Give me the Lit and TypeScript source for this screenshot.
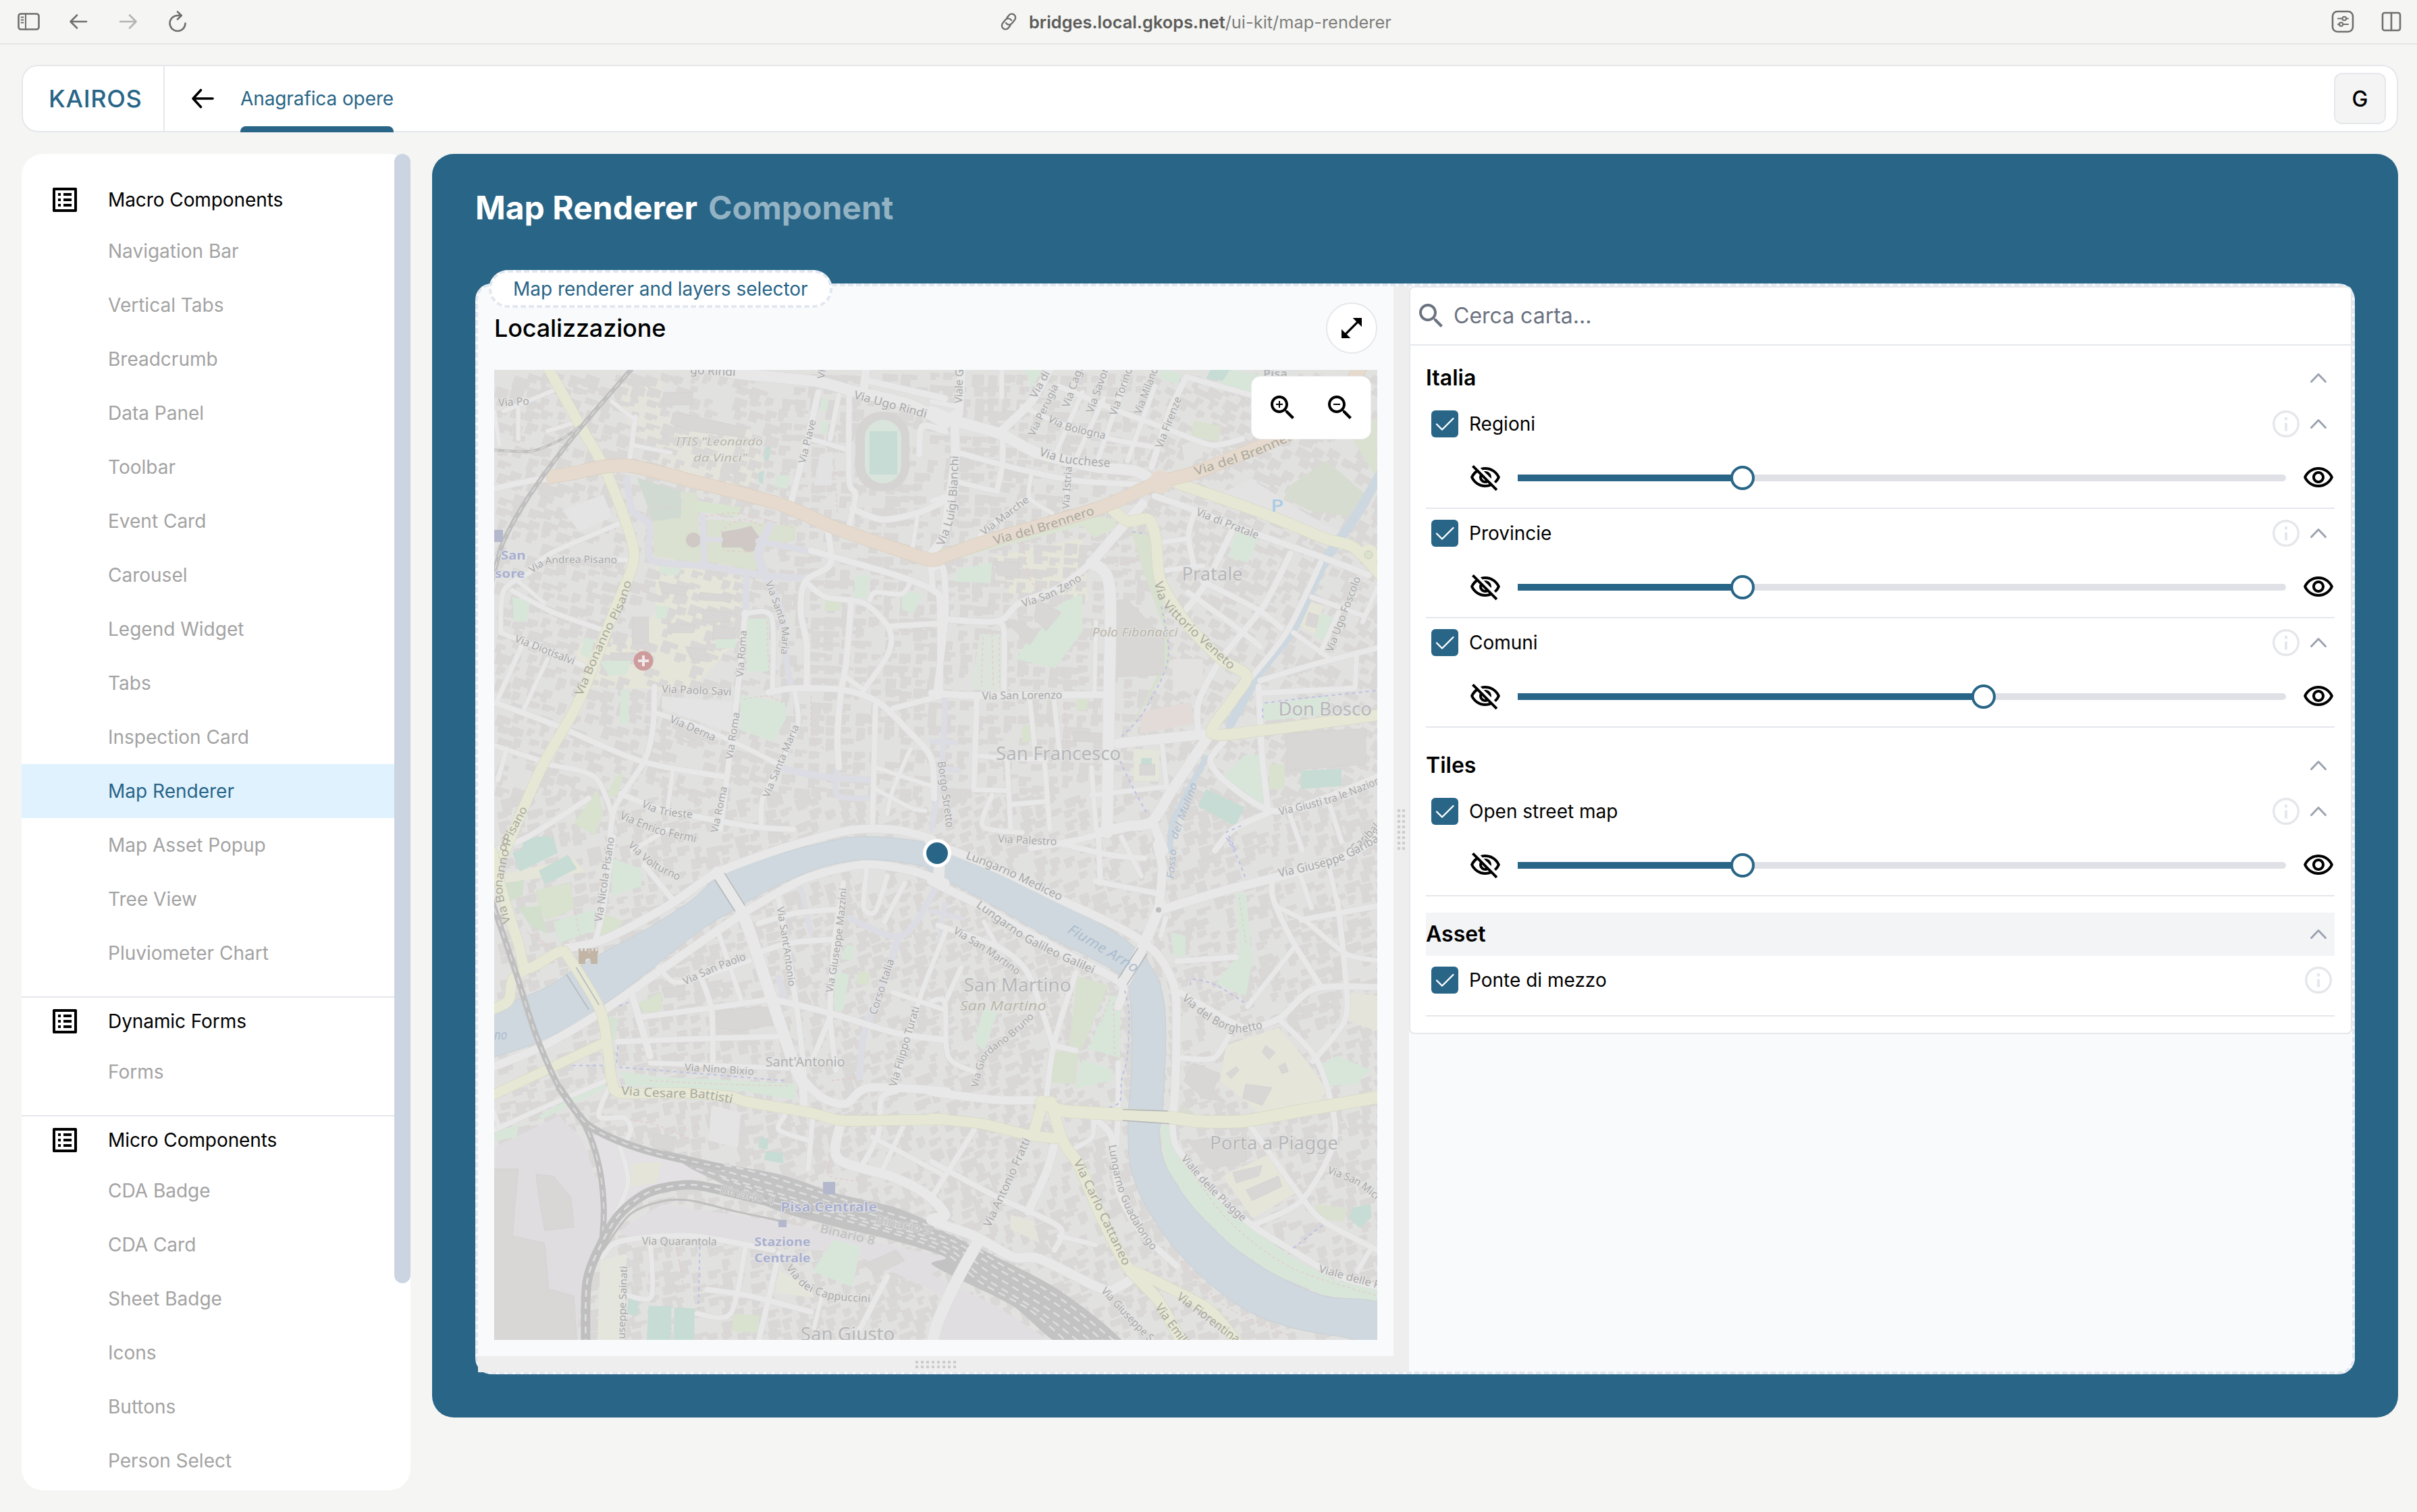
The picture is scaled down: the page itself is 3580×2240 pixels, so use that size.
import { LitElement, html, css, svg, nothing } from "lit";
import { customElement, property } from "lit/decorators.js";

/* ---------- Map geometry ---------- */

// The city is digitised on four sheets, each with its own scale and origin.
type Pt = [number, number];
const SHEETS: Record<string, [number, number, number, number]> = {
  A: [2.306, 2.178, -12, -8],
  B: [2.24, 2.178, 648, -8],
  C: [2.306, 1.912, -12, 692],
  D: [2.063, 1.912, 648, 692],
};

function points(src: string): Pt[] {
  let sheet = SHEETS.A;
  const out: Pt[] = [];
  for (const token of src.trim().split(/\s+/)) {
    if (SHEETS[token]) {
      sheet = SHEETS[token];
      continue;
    }
    const [x, y] = token.split(",").map(Number);
    out.push([+(x / sheet[0] + sheet[2]).toFixed(1), +(y / sheet[1] + sheet[3]).toFixed(1)]);
  }
  return out;
}

function smooth(src: string): string {
  const p = points(src);
  let d = `M${p[0][0]} ${p[0][1]}`;
  for (let i = 0; i < p.length - 1; i++) {
    const a = p[i - 1] ?? p[i];
    const b = p[i];
    const c = p[i + 1];
    const e = p[i + 2] ?? c;
    const k = 7;
    d += `C${b[0] + (c[0] - a[0]) / k} ${b[1] + (c[1] - a[1]) / k} ${c[0] - (e[0] - b[0]) / k} ${c[1] - (e[1] - b[1]) / k} ${c[0]} ${c[1]}`;
  }
  return d;
}

const area = (src: string) =>
  "M" + points(src).map((q) => q.join(" ")).join("L") + "Z";

function buildings(): string {
  let seed = 41;
  const rnd = () => {
    seed = (seed * 16807) % 2147483647;
    return seed / 2147483647;
  };
  let d = "";
  for (let y = 4; y < 1437; y += 18) {
    for (let x = 4; x < 1308; x += 22) {
      if (rnd() < 0.14) continue;
      const west = x < 420;
      const north = y < 620;
      const t = west ? (north ? 0.32 : -0.22) : x > 950 ? (north ? 0.5 : -0.3) : north ? 0.08 : -0.35;
      const w = 10 + rnd() * 14;
      const h = 8 + rnd() * 11;
      const c = Math.cos(t);
      const s = Math.sin(t);
      const ox = x + rnd() * 6;
      const oy = y + rnd() * 5;
      const n = rnd() * 0.5 + 0.35;
      const shape: Pt[] = [[0, 0], [w, 0], [w, h * n], [w * 0.6, h * n], [w * 0.6, h], [0, h]];
      d += "M" + shape.map(([u, v]) => `${(ox + u * c - v * s).toFixed(1)} ${(oy + u * s + v * c).toFixed(1)}`).join("L") + "Z";
    }
  }
  return d;
}

const RIVER =
  "C 0,500 110,460 220,420 300,375 420,318 560,255 700,180 790,115 920,70 1080,30 1250,0 1380,2 1500,15 D 0,32 100,60 250,125 420,195 560,270 640,330 690,400 712,480 715,600 705,780 695,850 720,940 800,1050 920,1160 1050,1240 1200,1300 1375,1322 1375,1430 1250,1415 1100,1390 960,1340 830,1250 720,1140 640,1020 605,920 600,800 608,700 612,600 608,470 590,400 480,340 350,280 200,200 80,140 0,100 C 1500,85 1400,70 1280,65 1150,85 1000,135 880,190 740,260 600,350 480,430 400,475 300,530 180,580 100,605 0,630";

const UNDER: [string, string][] = [
  ["#e5e4dc", "A 430,60 600,40 610,170 900,210 950,330 900,400 600,330 500,220"],
  ["#e5e5da", "A 580,630 870,690 870,880 700,1050 340,1040 300,900 500,880 580,800"],
  ["#e5e5da", "B 200,620 500,560 520,760 260,740"],
];

// Grounds drawn over the generic blocks
const OPEN: [string, string][] = [
  ["#e5e5da", "D 900,590 1060,540 1150,640 1210,720 1160,770 1000,780 880,690"],
  ["#e5e5da", "D 890,960 1050,890 1110,1010 980,1080"],
  ["#e0dde1", "C 0,890 250,790 330,860 390,1000 390,1130 330,1250 310,1440 0,1440"],
  ["#e1dee2", "C 450,1120 600,1040 1000,1090 1568,1190 D 0,1240 200,1330 380,1440 0,1440 C 1568,1300 1250,1180 1000,1160 700,1125 480,1130"],
  ["#e4e1e4", "C 350,840 460,870 590,900 800,950 600,990 460,1050 400,1120 395,950"],
  ["#e3dbd8", "B 700,1120 860,1090 870,1160 690,1190"],
  ["#e4e4e4", "A 600,1070 850,1090 840,1190 600,1110"],
  ["#e4e4e4", "A 260,470 400,420 430,490 320,540"],
  ["#e3e3e3", "B 900,440 1060,370 1240,480 1390,560 1300,560 1100,480"],
  ["#e2e2e1", "B 830,260 900,230 900,300 840,320"],
  ["#e2e2e2", "A 1140,290 1185,280 1180,390 1120,390"],
  ["#e4e4e4", "C 770,760 870,780 860,880 760,860"],
  ["#e4e2e0", "B 800,950 900,950 900,1040 800,1060"],
];

const PARKS: [string, string][] = [
  ["#d0dad2", "A 515,365 665,410 668,495 570,505"],
  ["#dae1d0", "A 570,505 665,495 670,410 720,415 735,640 575,620"],
  ["#dae1d0", "A 755,500 1060,520 1055,570 960,580 920,665 755,635"],
  ["#d9e4d0", "A 720,440 870,460 860,490 720,475"],
  ["#d8e6da", "A 890,820 965,820 968,990 890,990"],
  ["#d8e6da", "A 870,1065 1020,1090 1025,1140 980,1215 870,1180"],
  ["#d8e6da", "A 90,750 150,765 140,830 95,830"],
  ["#d8e6da", "A 390,960 500,940 480,1000 420,1005"],
  ["#d8e6da", "A 340,880 370,890 350,950 320,930"],
  ["#d8e6da", "A 460,1050 490,1050 485,1160 455,1160"],
  ["#d8e6da", "A 1260,680 1310,680 1300,755 1258,750"],
  ["#d8e6da", "A 1420,730 1490,740 1460,805 1420,790"],
  ["#d8e6da", "A 590,650 665,655 655,680 595,675"],
  ["#d8e6da", "A 580,780 625,780 615,820 580,820"],
  ["#d8e6da", "A 785,880 855,885 850,915 785,915"],
  ["#d9e1cf", "A 1160,755 1215,765 1210,795 1155,795"],
  ["#d9e1cf", "A 380,1370 400,1450 370,1520 300,1480"],
  ["#d9e1cf", "A 440,1330 470,1320 450,1390 410,1400"],
  ["#d8e6da", "A 1145,110 1170,110 1165,150 1140,150"],
  ["#d8e6da", "A 1145,185 1170,185 1165,225 1140,220"],
  ["#c6dcd4", "A 130,1530 215,1520 240,1568 120,1568"],
  ["#c6dcd4", "A 955,265 972,265 965,310 948,305"],
  ["#c6dcd4", "A 933,345 950,345 945,385 930,380"],
  ["#d8e6da", "A 990,355 1035,360 1030,400 985,395"],
  ["#dbe3d2", "B 0,600 560,490 600,500 620,520 540,560 500,520 100,620"],
  ["#d8e0cf", "B 660,530 740,560 760,700 780,860 790,960 700,1110 640,1200 720,1060 770,960 770,850 700,660"],
  ["#d8e6da", "B 90,660 200,640 195,705 75,700"],
  ["#d8e6da", "B 430,770 500,740 500,860 410,980 280,950 320,890 350,870"],
  ["#dde4dc", "B 160,870 230,870 230,1050 130,1050"],
  ["#d6dccf", "B 1190,390 1310,310 1440,420 1380,490 1250,470 1170,430"],
  ["#dae1d0", "B 1390,230 1478,170 1478,370"],
  ["#dae1d0", "B 870,180 960,200 950,250 860,230"],
  ["#d8e6da", "B 1010,540 1085,560 1050,640 985,620"],
  ["#e5e5da", "B 1240,760 1300,780 1270,870 1200,830"],
  ["#d8e6da", "B 1290,800 1330,820 1310,890 1270,880"],
  ["#d8e6da", "B 1095,1095 1320,1070 1300,1130 1100,1150"],
  ["#d8e6da", "B 1040,1260 1100,1260 1100,1420 970,1330"],
  ["#d9e1cf", "B 1120,1290 1170,1290 1170,1370 1120,1370"],
  ["#d9e1cf", "B 300,1165 350,1160 345,1215 300,1220"],
  ["#d9e1cf", "B 480,1080 520,1080 515,1115 480,1115"],
  ["#e4e5db", "B 670,1240 755,1245 755,1345 670,1345"],
  ["#c6dcd4", "B 695,1270 730,1270 730,1295 695,1295"],
  ["#c6dcd4", "B 1225,1310 1360,1305 1360,1360 1225,1370"],
  ["#c6dcd4", "B 910,1370 1040,1430 1005,1490 885,1425"],
  ["#c6dcd4", "B 925,17 990,17 975,55 910,45"],
  ["#d8e6da", "B 990,17 1130,40 1150,120 1060,100 960,60"],
  ["#d8e6da", "B 310,17 370,17 330,75"],
  ["#d8e6da", "B 770,17 830,30 815,65 750,40"],
  ["#e5e5d9", "C 30,110 300,60 340,100 60,130"],
  ["#c6dcd4", "C 90,45 230,0 245,45 115,98"],
  ["#c6dcd4", "C 180,95 280,50 310,90 200,135"],
  ["#d3dfcd", "C 60,135 130,120 125,165 75,185"],
  ["#d9e1cf", "C 170,150 290,130 300,205 210,235 180,200"],
  ["#d3dfcd", "C 110,200 185,195 210,275 150,250"],
  ["#d8e6da", "C 230,240 370,205 370,265 250,300"],
  ["#d8e6da", "C 430,60 530,90 530,140 430,165"],
  ["#d9e1cf", "C 400,215 470,240 430,275 385,280"],
  ["#d8e6da", "C 1190,380 1240,390 1220,490 1190,495"],
  ["#d8e6da", "C 1230,305 1260,310 1250,350 1210,345"],
  ["#d9e1cf", "C 1270,380 1315,385 1305,420 1265,415"],
  ["#d8e6da", "C 460,665 600,680 850,690 1060,700 1055,745 880,720 480,705"],
  ["#d6e2d3", "C 405,505 450,515 440,575 410,560"],
  ["#d9e1cf", "C 520,470 600,440 600,490 540,500"],
  ["#d8e6da", "C 28,835 110,815 105,850 28,860"],
  ["#d8e6da", "C 180,790 400,690 410,710 190,800"],
  ["#c6dcd4", "C 935,850 965,855 960,885 930,880"],
  ["#c6dcd4", "C 955,890 1015,895 1015,925 950,915"],
  ["#c6dcd4", "C 555,1328 633,1330 630,1440 548,1440"],
  ["#c6dcd4", "C 643,1332 713,1336 710,1440 640,1440"],
  ["#c6dcd4", "C 485,1308 522,1308 518,1355 482,1352"],
  ["#d8e6da", "C 1190,1140 1280,1160 1250,1275 1115,1230"],
  ["#d9e1cf", "C 845,1350 935,1355 925,1405 840,1400"],
  ["#e4e5d8", "C 500,925 600,920 580,980 490,990"],
  ["#e4e5dc", "C 390,1200 480,1180 470,1440 380,1440"],
  ["#e5e6db", "C 1000,1230 1110,1270 1120,1305 990,1290"],
  ["#d8e6da", "D 930,160 960,160 980,350 960,450 870,415 940,330"],
  ["#d8e6da", "D 545,450 575,450 575,625 480,600"],
  ["#d8e0cf", "D 445,395 540,420 460,600 420,590"],
  ["#d8e0cf", "D 370,610 450,600 440,700 365,695"],
  ["#d8e6da", "D 460,630 555,660 550,690 440,712"],
  ["#d8e6da", "D 160,480 200,500 160,605 130,580"],
  ["#d8e6da", "D 1180,650 1240,620 1340,660 1300,700 1210,705"],
  ["#d8e6da", "D 695,820 720,815 760,880 850,1000 980,1110 1100,1190 1230,1255 1375,1285 1375,1320 1200,1298 1050,1240 920,1160 800,1050 720,940"],
  ["#c6dcd4", "D 1285,1050 1340,1040 1345,1075 1310,1108 1275,1080"],
  ["#dae1d0", "D 1170,1040 1270,1050 1260,1090 1180,1080"],
  ["#d8e6da", "D 730,270 775,280 775,340 740,335"],
  ["#d9dcd2", "D 760,755 800,780 780,810 750,800"],
  ["#e4e4da", "D 240,1070 310,1090 330,1150 240,1110"],
  ["#e4e4da", "D 1280,440 1362,450 1362,550 1270,520"],
];

const BLOCKS: string[] = [
  "A 605,90 705,90 705,130 605,130",
  "A 640,155 700,165 890,205 880,235 700,215 630,190",
  "A 590,700 690,720 680,745 600,735",
  "A 730,735 840,745 835,765 730,760",
  "A 620,835 715,840 710,865 620,865",
  "A 500,815 555,815 555,900 500,900",
  "A 775,840 850,850 850,885 775,885",
  "A 680,910 750,920 760,960 700,950",
  "A 740,790 840,800 830,830 740,830",
  "A 425,930 510,930 510,955 425,955",
  "B 580,760 650,760 770,880 770,1000 580,1010",
  "B 245,830 300,830 350,870 325,905",
  "B 350,760 430,800 380,860 340,820",
  "B 470,1185 570,1190 570,1220 470,1215",
  "B 1175,1190 1440,1175 1440,1290 1180,1310",
  "B 690,1290 740,1290 740,1325 690,1325",
  "B 210,635 290,640 290,690 220,680",
  "B 1250,800 1285,810 1275,850 1240,840",
  "C 28,940 110,940 90,1130 200,1150 215,1280 300,1300 310,1425 28,1425",
  "C 170,955 230,960 290,1020 300,1105 200,1115 180,1020",
  "C 790,490 990,480 990,530 860,550 780,540",
  "C 600,430 680,420 675,450 610,455",
  "C 570,840 650,850 640,890 570,880",
  "C 1290,1210 1400,1170 1430,1200 1330,1240",
  "D 800,640 880,670 860,720 900,750 830,740 770,690",
  "D 960,700 1040,710 1010,760 950,740",
  "D 1020,590 1050,610 1030,630 1010,610",
  "D 900,670 930,650 940,660 915,685",
  "D 1060,650 1080,640 1090,665 1070,670",
  "D 780,860 960,850 960,920 850,940",
  "D 920,950 1010,930 1000,960 930,980",
  "D 960,1000 1060,960 1070,990 980,1030",
];

// [class, width, geometry]
const ROADS: [string, number, string][] = [
  ["foot", 8, "A 740,490 745,650"],
  ["foot", 7, "A 740,565 800,565"],
  ["foot", 9, "A 480,370 500,470 560,520 565,630 750,650 960,682 1100,690"],
  ["foot", 12, "A 970,520 930,610 960,690"],
  ["foot", 8, "A 930,570 1040,590 1110,605"],
  ["foot", 8, "A 890,680 885,800"],
  ["foot", 8, "A 960,690 1010,800 1020,920 1040,1030"],
  ["foot", 9, "A 1000,1300 1150,1330 1310,1340"],
  ["foot", 7, "A 1200,1300 1200,1390 1320,1400"],
  ["foot", 7, "B 45,1070 35,1280 0,1500"],
  ["foot", 7, "B 0,1215 80,1220"],
  ["foot", 7, "B 0,1300 90,1310"],
  ["foot", 9, "C 1410,280 1380,360 1330,470 1290,560 1275,680"],
  ["foot", 8, "C 1240,230 1420,280 1540,140"],
  ["foot", 8, "C 1000,400 1030,480"],
  ["foot", 6, "C 1070,130 1110,270"],
  ["foot", 6, "D 0,210 90,230"],
  ["foot", 6, "D 40,190 20,330"],
  ["minor", 8, "A 1240,90 1240,370 1262,420 1240,520"],
  ["minor", 9, "A 1135,90 1090,270 1040,450"],
  ["minor", 12, "A 1297,17 1290,90"],
  ["minor", 7, "A 1205,100 1175,240"],
  ["minor", 7, "A 1110,240 1235,275"],
  ["minor", 7, "A 510,170 490,310"],
  ["minor", 6, "A 430,120 510,180"],
  ["minor", 6, "A 110,130 110,240"],
  ["minor", 6, "A 28,150 45,260"],
  ["minor", 6, "A 60,150 240,80"],
  ["minor", 6, "A 210,215 310,185"],
  ["minor", 6, "A 500,260 630,285"],
  ["minor", 9, "A 1110,600 1400,680 1530,730 1550,780 1550,1070"],
  ["minor", 9, "A 1168,540 1175,645 1090,700 1075,800 1095,900 1095,1040"],
  ["minor", 8, "A 1090,700 1160,750 1290,770 1375,850 1375,930 1290,1050"],
  ["minor", 7, "A 1310,760 1330,735 1420,740 1450,700"],
  ["minor", 8, "A 1375,845 1550,835"],
  ["minor", 9, "A 1248,760 1230,960 1212,1060 1200,1200 1205,1300"],
  ["minor", 7, "A 1230,1010 1290,1050"],
  ["minor", 9, "A 965,1058 1050,1045 1220,1050 1340,1090 1440,1180 1520,1270 1530,1400"],
  ["minor", 7, "A 880,805 975,815 978,1055"],
  ["minor", 8, "A 885,800 865,1000 850,1130 820,1350 800,1500"],
  ["minor", 8, "A 575,1040 570,1170 540,1280 440,1430 420,1568"],
  ["minor", 7, "A 580,1125 700,1160 850,1220 1000,1290"],
  ["minor", 7, "A 210,1290 370,1330 430,1450"],
  ["minor", 8, "A 28,1090 240,1165 530,1280 810,1330"],
  ["minor", 7, "A 28,1230 190,1280"],
  ["minor", 7, "A 70,1240 40,1340"],
  ["minor", 6, "A 640,1300 620,1430"],
  ["minor", 8, "A 460,1385 600,1435 900,1490 1050,1500"],
  ["minor", 7, "A 1055,1060 1065,1160 1010,1280 945,1400 940,1490"],
  ["minor", 8, "A 1330,1100 1320,1480"],
  ["minor", 8, "A 1390,1110 1550,1070"],
  ["minor", 6, "A 1330,1300 1520,1360"],
  ["minor", 6, "A 1330,1370 1450,1430 1500,1440"],
  ["minor", 6, "A 1450,1240 1390,1370 1370,1450"],
  ["minor", 7, "A 50,860 60,730 150,670"],
  ["minor", 7, "A 90,730 230,800 410,860"],
  ["minor", 7, "A 50,865 200,920 330,970"],
  ["minor", 7, "A 130,890 40,1080"],
  ["minor", 6, "A 210,950 130,1110"],
  ["minor", 6, "A 200,770 110,700"],
  ["minor", 7, "A 150,660 230,605 450,515"],
  ["minor", 7, "A 450,630 510,630"],
  ["minor", 8, "A 28,400 150,375 210,370"],
  ["minor", 9, "A 1250,465 1350,500 1470,480 1568,440"],
  ["minor", 6, "A 1475,480 1455,600"],
  ["minor", 9, "A 1480,290 1490,200 1568,215"],
  ["minor", 9, "A 1520,650 1525,720"],
  ["minor", 8, "A 28,1568 150,1520 350,1400"],
  ["minor", 7, "A 500,1568 620,1500"],
  ["minor", 12, "B 100,17 90,160"],
  ["minor", 13, "B 75,160 78,300 60,430 40,550 0,610"],
  ["minor", 12, "B 230,215 330,120 390,17"],
  ["minor", 7, "B 300,135 400,180 570,235 730,265"],
  ["minor", 8, "B 420,70 620,150 800,215 930,260 1030,240"],
  ["minor", 9, "B 845,40 790,150 730,330"],
  ["minor", 8, "B 845,40 1100,110"],
  ["minor", 7, "B 500,90 410,290"],
  ["minor", 7, "B 570,110 480,300"],
  ["minor", 7, "B 640,60 550,310"],
  ["minor", 7, "B 740,70 650,310"],
  ["minor", 8, "B 90,285 300,340 480,375 700,388"],
  ["minor", 8, "B 235,220 235,320 218,400"],
  ["minor", 7, "B 90,380 218,410"],
  ["minor", 6, "B 330,360 325,430 400,480"],
  ["minor", 7, "B 160,550 300,440"],
  ["minor", 7, "B 232,17 232,105"],
  ["minor", 7, "B 0,120 80,135"],
  ["minor", 6, "B 455,320 445,460"],
  ["minor", 7, "B 0,440 60,420"],
  ["minor", 9, "B 0,660 38,660 45,820 15,1060"],
  ["minor", 9, "B 45,822 220,828 290,770 420,720 530,640"],
  ["minor", 14, "B 530,640 600,560 700,450"],
  ["minor", 8, "B 220,830 240,860 240,1060"],
  ["minor", 6, "B 545,830 540,1060"],
  ["minor", 10, "B 0,1060 150,1068 580,1065"],
  ["minor", 17, "B 530,640 590,715 588,1100 582,1510"],
  ["minor", 15, "B 620,1222 900,1193"],
  ["minor", 15, "B 925,1190 800,1370 730,1475 650,1490 560,1510"],
  ["minor", 9, "B 590,1505 480,1535 330,1560"],
  ["minor", 9, "B 885,1190 885,1090 960,950 1100,780 1190,610"],
  ["minor", 9, "B 740,425 860,465 1000,520 1290,620 1450,680"],
  ["minor", 8, "B 875,470 852,550 870,650"],
  ["minor", 7, "B 750,575 850,562"],
  ["minor", 7, "B 770,665 900,650"],
  ["minor", 9, "B 840,795 910,705 1000,530"],
  ["minor", 8, "B 900,700 1080,790 1160,850"],
  ["minor", 8, "B 850,735 1000,840 1090,910"],
  ["minor", 8, "B 1290,640 1180,860 1060,1010"],
  ["minor", 8, "B 1090,1020 1260,970 1478,915"],
  ["minor", 8, "B 1090,1060 1400,1045"],
  ["minor", 7, "B 1200,865 1330,955"],
  ["minor", 7, "B 1260,750 1430,810"],
  ["minor", 7, "B 1350,800 1290,930"],
  ["minor", 7, "B 1410,930 1405,1040"],
  ["minor", 7, "B 1478,720 1430,830"],
  ["minor", 9, "B 1085,1040 1095,1250 1115,1430"],
  ["minor", 9, "B 970,1215 925,1280 980,1350 1130,1440 1300,1400 1478,1330"],
  ["minor", 9, "B 1120,1445 1000,1500 940,1568"],
  ["minor", 7, "B 1180,1430 1230,1568"],
  ["minor", 7, "B 1320,1420 1360,1540"],
  ["minor", 8, "B 150,1070 140,1370"],
  ["minor", 7, "B 325,1080 345,1265"],
  ["minor", 7, "B 405,1070 425,1260"],
  ["minor", 7, "B 250,1270 262,1500"],
  ["minor", 7, "B 375,1290 392,1500"],
  ["minor", 7, "B 140,1372 250,1375"],
  ["minor", 7, "B 530,1390 780,1362"],
  ["minor", 7, "B 150,1262 240,1270 380,1275"],
  ["minor", 7, "B 530,1300 545,1500"],
  ["minor", 7, "B 765,1230 780,1365"],
  ["minor", 7, "B 200,1390 170,1490 300,1510"],
  ["minor", 7, "B 260,1420 380,1410"],
  ["minor", 13, "B 735,1480 770,1568 D 690,20 705,90 695,190"],
  ["minor", 13, "D 705,205 900,150 1050,115 1250,60 1362,0"],
  ["minor", 8, "D 510,0 515,130"],
  ["minor", 8, "D 400,20 540,50 650,60"],
  ["minor", 8, "D 500,125 690,160"],
  ["minor", 7, "D 580,0 640,110"],
  ["minor", 8, "D 750,352 930,340"],
  ["minor", 7, "D 715,230 700,280"],
  ["minor", 8, "D 755,625 860,627 910,560"],
  ["minor", 9, "D 760,440 870,500 960,540 1060,515 1170,430 1362,425"],
  ["minor", 8, "D 1040,130 1045,180 1100,290 1190,425"],
  ["minor", 8, "D 1060,515 1170,620 1220,750 1228,870 1130,1030 980,1100"],
  ["minor", 8, "D 1240,180 1265,400 1262,520 1165,635"],
  ["minor", 8, "D 1130,235 1362,195"],
  ["minor", 7, "D 1060,200 1140,235"],
  ["minor", 7, "D 1140,235 1265,330 1362,350"],
  ["minor", 7, "D 1110,310 965,480"],
  ["minor", 7, "D 1210,70 1240,190"],
  ["minor", 7, "D 1120,90 1160,200"],
  ["minor", 8, "D 975,820 1130,1020 1200,1090 1362,1170"],
  ["minor", 7, "D 1340,1170 1300,1230"],
  ["minor", 9, "D 735,800 750,880 860,1000 980,1100 1100,1170 1230,1240 1362,1275"],
  ["minor", 9, "D 500,800 550,850 570,1000 640,1120 750,1215"],
  ["minor", 7, "D 495,790 490,850 440,880"],
  ["minor", 12, "C 1085,690 1150,740 1230,755 1310,710 1568,720 D 0,722 200,745 345,745"],
  ["minor", 12, "D 375,870 350,950 295,1060"],
  ["minor", 8, "D 0,1020 130,830"],
  ["minor", 8, "D 0,920 200,1020 390,1105 375,1170"],
  ["minor", 7, "D 390,1130 500,1155"],
  ["minor", 8, "D 20,250 200,310 290,380 340,500 370,590"],
  ["minor", 8, "D 370,590 440,605"],
  ["minor", 8, "D 440,385 375,580 350,740"],
  ["minor", 7, "D 0,465 40,470 50,620 130,665"],
  ["minor", 7, "D 40,470 90,370"],
  ["minor", 6, "D 200,310 160,240"],
  ["minor", 10, "C 500,450 560,620"],
  ["minor", 8, "C 450,580 700,572 1000,565"],
  ["minor", 8, "C 530,510 760,485 970,460"],
  ["minor", 7, "C 560,640 1030,655"],
  ["minor", 8, "C 735,400 770,490 775,640"],
  ["minor", 7, "C 795,275 870,460"],
  ["minor", 7, "C 590,370 640,410 720,400 900,350"],
  ["minor", 8, "C 930,245 1060,215 1200,205"],
  ["minor", 8, "C 920,330 1040,300 1180,290"],
  ["minor", 9, "C 960,455 1180,500 1400,555 1568,575"],
  ["minor", 8, "C 1000,175 1060,480 1085,650"],
  ["minor", 8, "C 1220,130 1190,300 1175,500 1195,660"],
  ["minor", 8, "C 1175,510 1110,640"],
  ["minor", 7, "C 1300,90 1290,200 1330,210 1370,110"],
  ["minor", 7, "C 1390,440 1568,490"],
  ["minor", 7, "C 1568,270 1480,460 1400,690"],
  ["minor", 7, "C 1430,130 1360,240"],
  ["minor", 14, "C 1215,800 1200,910 1380,960 1500,1010 1568,1070 D 0,1085 130,1130 250,1190 330,1195 520,1280 570,1275 630,1240"],
  ["minor", 12, "C 1080,640 1085,760"],
  ["minor", 7, "C 1020,790 1000,830 1110,862"],
  ["minor", 7, "C 1115,800 1100,940"],
  ["minor", 8, "C 1285,930 1340,840 1350,740 1400,720"],
  ["minor", 7, "C 1350,950 1430,810"],
  ["minor", 7, "C 1320,850 1568,960"],
  ["minor", 8, "C 395,1190 460,1145 700,1130 980,1170"],
  ["minor", 7, "C 560,1140 565,1300 480,1298"],
  ["minor", 7, "C 885,1165 835,1350 720,1350"],
  ["minor", 8, "C 755,1282 900,1300 1110,1345"],
  ["minor", 8, "C 1000,1180 970,1290 930,1430"],
  ["minor", 8, "C 1370,1245 1270,1405"],
  ["minor", 6, "C 1150,1290 1120,1390"],
  ["minor", 7, "C 28,830 200,765 410,690"],
  ["minor", 6, "C 28,780 45,825"],
  ["minor", 7, "C 430,690 385,790 470,795 495,830 470,870"],
  ["minor", 7, "C 455,870 485,980 430,1090"],
  ["minor", 8, "C 375,290 400,200 435,0"],
  ["minor", 8, "C 540,80 640,180"],
  ["minor", 12, "C 275,315 380,297 480,260 640,185 780,105 930,55 1080,15 1250,-20 1400,-20 1520,5 D 0,15 200,90 400,180 560,250 650,300 700,345 740,420 748,500 745,700 735,800"],
  ["minor", 12, "C 28,650 200,590 400,492 600,375 850,232 960,175 1100,115 1290,78 1450,95 1568,130 D 0,125 150,195 300,275 450,350 580,415 570,480"],
  ["minor", 8, "D 570,640 570,760 565,870"],
  ["minor", 17, "C 790,100 880,225 960,420 1050,640 1085,700"],
  ["minor", 16, "C 1550,40 1545,130"],
  ["minor", 16, "D 700,190 650,300 590,410"],
  ["minor", 16, "B 0,150 90,185 230,225 350,285 540,330 680,345 750,390"],
  ["minor", 16, "A 800,17 870,30 1130,55 1250,85 1450,130 1568,190"],
  ["minor", 9, "A 1295,50 1568,110"],
  ["minor", 17, "D 140,1150 80,1250 20,1370 0,1440"],
  ["yellow", 15, "A 205,0 320,195 410,345 495,560 500,650 440,790 320,1080 190,1300 60,1580"],
  ["yellow", 15, "C 20,40 60,170 110,300 140,372 250,325 285,345 390,490 415,600 430,690 460,725 650,725 830,735 890,750 1100,780 1215,803 1400,802 1568,800 D 0,798 150,812 300,845 400,855"],
  ["yellow", 15, "C 0,495 75,465 90,405 140,372"],
  ["yellow", 14, "C 0,740 230,650 410,580"],
  ["yellow", 18, "D 335,750 400,775 560,785 730,795 815,805 950,805 1130,775 1375,735"],
  ["yellow", 16, "D 340,750 310,845"],
  ["yellow", 16, "D 365,750 400,860 450,930 520,1080 600,1220 690,1310 770,1440"],
  ["yellow", 15, "D 620,1230 700,1265 850,1340 940,1440"],
  ["yellow", 16, "B 590,460 650,505 720,500 745,570 760,700 850,840 960,950 1045,1005 1000,1080 930,1190 1100,1180 1300,1155 1490,1130"],
  ["yellow", 16, "B 820,385 1100,480 1300,560 1400,590 1490,680"],
  ["orange", 19, "A 205,365 300,350 400,330 500,328 700,375 1000,450 1200,530 1400,595 1520,630 B 60,612 200,565 550,465 740,385 870,350 1050,280 1250,195 1340,130 1430,0"],
];

const RAILS: [number, string][] = [
  [7, "A 510,0 300,230 150,420 60,570 20,700"],
  [4, "A 20,275 150,280 250,245 320,200"],
  [9, "C 15,170 100,380 170,560 250,710 340,820 385,930 402,1050 395,1160"],
  [11, "C 250,710 340,810 450,860 600,900 800,935"],
  [14, "C 340,1440 345,1260 395,1150 460,1065 560,1005 700,985 850,1010 1100,1060"],
  [3, "C 400,1170 490,1070 600,1032 700,1030 850,1060 1010,1088"],
];

const YARD =
  "C 600,885 800,925 1000,955 1200,1010 1400,1050 1568,1110 D 0,1100 200,1190 400,1290 590,1440 400,1440 250,1330 100,1260 0,1210 C 1568,1190 1400,1145 1200,1105 1000,1060 850,1000 700,940";

const YARD_LINES: string[] = [
  "C 650,905 900,945 1200,1022 1568,1118 D 200,1204 400,1312 575,1440",
  "C 680,920 900,965 1200,1040 1568,1135 D 200,1222 400,1335 540,1440",
  "C 700,935 900,985 1200,1060 1568,1150 D 180,1236 370,1345 505,1440",
  "C 800,965 1000,1020 1300,1092 1568,1162 D 150,1243 330,1345 465,1440",
  "C 880,1000 1100,1058 1400,1125 1568,1178 D 150,1262 300,1340 425,1440",
];

const DASHES: string[] = [
  "B 665,540 710,546",
  "B 762,780 785,900 780,970 750,1040 690,1140 625,1205",
  "B 625,1280 670,1370 715,1450",
  "B 1105,1092 1250,1075 1478,1052",
  "B 1098,1110 1098,1140",
  "B 975,1510 1035,1485",
  "B 985,1520 1010,1568 D 900,0 930,50 960,118",
  "D 790,420 800,403 870,420 960,472",
  "D 590,435 603,500 598,620 580,690 575,750 535,768",
  "D 1105,1165 1200,1095",
  "C 295,647 410,647",
  "C 455,652 650,665 1020,690",
  "C 730,1160 725,1335",
  "C 455,478 495,466",
  "C 450,592 445,640",
];

const RED: string[] = [
  "A 570,460 660,462", "A 800,540 870,500 950,530 930,600 810,600", "A 750,490 860,480 1050,525",
  "A 880,820 885,990", "A 960,830 965,1000", "A 880,1080 960,1070 1010,1090", "A 1110,1070 1115,1200 1170,1250",
  "B 300,570 330,700 380,720", "B 170,880 165,1040", "B 200,870 205,1040", "B 225,880 225,1040", "B 610,650 680,630",
  "B 440,1090 450,1240", "C 560,690 800,700 1040,705", "C 490,800 600,820 720,865",
  "C 1180,900 1175,960 1280,975", "D 545,460 515,530", "D 555,470 560,640", "D 940,170 960,300",
  "D 740,870 900,1080 1100,1220 1362,1300", "D 750,1190 900,1330 1100,1415", "C 140,270 240,320", "C 300,200 320,280",
  "C 1180,690 1290,680", "A 1190,330 1200,480", "B 300,60 305,100", "C 650,1150 675,1280",
];

// [text, size, class, geometry of the line that runs through the middle of the letters]
const LABELS: [string, number, string, string][] = [
  ["Via Po", 16, "st", "A 42,123 147,117"],
  ["go Rindi", 17, "st", "A 697,17 852,24"],
  ["Via Ugo Rindi", 17, "st", "A 1258,97 1505,160"],
  ["Via Piave", 15, "st", "A 1078,318 1115,178"],
  ["ITIS \"Leonardo", 17, "poi", "A 648,249 945,249"],
  ["da Vinci\"", 17, "poi", "A 708,300 892,300"],
  ["San", 18, "rail", "A 50,616 135,616"],
  ["sore", 18, "rail", "A 30,674 132,674"],
  ["Via Andrea Pisano", 15, "st", "A 150,665 205,634 300,629 452,630"],
  ["Via Bonanno Pisano", 17, "hw", "A 315,1065 400,880 455,780 485,692"],
  ["Via Diotisalvi", 16, "st", "A 100,882 302,958"],
  ["Via Santa Maria", 15, "st", "A 965,700 1000,790 1022,860 1018,940"],
  ["Via Roma", 15, "st", "A 866,1008 878,858"],
  ["Via Paolo Savi", 16, "st", "A 600,1046 838,1056"],
  ["Via Derna", 16, "st", "A 630,1142 783,1205"],
  ["Via Roma", 15, "st", "A 830,1273 854,1122"],
  ["Via Santa Maria", 15, "st", "A 955,1395 1010,1270 1060,1160"],
  ["Via Trieste", 16, "st", "A 535,1415 600,1440 708,1452"],
  ["Via Roma", 15, "st", "A 778,1510 812,1362"],
  ["Via Enrico Fermi", 17, "st", "A 460,1453 590,1502 722,1530"],
  ["o Pisano", 17, "hw", "A 50,1568 130,1428"],
  ["Vi", 15, "st", "A 1143,46 1148,15"],
  ["Viale G", 16, "st", "B 88,125 92,15"],
  ["Via di", 16, "st", "B 335,105 382,22"],
  ["Via Cagl", 16, "st", "B 443,137 490,10"],
  ["Via Savon", 16, "st", "B 523,155 578,5"],
  ["Via Torino", 16, "st", "B 600,163 655,10"],
  ["Via Milano", 16, "st", "B 682,158 740,10"],
  ["Via Perugia", 15, "st", "B 330,228 410,65"],
  ["Via Bologna", 16, "st", "B 390,172 450,200 580,230"],
  ["Via Firenze", 16, "st", "B 753,268 818,105"],
  ["Via Lucchese", 18, "st", "B 360,280 450,305 596,318"],
  ["Via Luigi Bianchi", 17, "st", "B 28,582 65,470 76,290"],
  ["Via Istria", 15, "st", "B 444,466 453,328"],
  ["Via Marche", 15, "st", "B 166,543 318,432"],
  ["Via del Brennero", 18, "hw", "B 205,568 380,520 542,468"],
  ["Via del Brennero", 18, "hw", "B 872,345 1060,285 1225,215"],
  ["Via di Pratale", 16, "st", "B 880,474 1084,552"],
  ["P", 26, "park", "B 1125,454 1168,454"],
  ["Pisa", 17, "rail2", "B 1100,31 1180,31"],
  ["Pratale", 27, "town", "B 830,676 1032,676"],
  ["Via San Zeno", 16, "st", "B 300,772 400,738 495,684"],
  ["Polo Fibonacci", 18, "poi", "B 532,864 817,864"],
  ["Via Vittorio Veneto", 18, "hw", "B 752,700 775,765 860,850 1005,980"],
  ["Via Ugo Foscolo", 16, "st", "B 1318,925 1412,685"],
  ["Don Bosco", 27, "town", "B 1150,1111 1460,1111"],
  ["Via San Lorenzo", 16, "st", "B 167,1069 433,1066"],
  ["San Francesco", 28, "town", "B 213,1255 628,1255"],
  ["Borgo Stretto", 16, "st", "B 32,1280 62,1494"],
  ["Via Palestro", 16, "st", "B 220,1530 415,1539"],
  ["Via Giusti tra le Nazioni", 16, "st", "B 1153,1443 1330,1400 1500,1335"],
  ["Garibaldi", 17, "st", "B 1395,1568 1500,1465"],
  ["Fosso", 15, "wat", "D 728,118 737,34"],
  ["del Mulino", 15, "wat", "B 802,1530 870,1350"],
  ["Via Volturno", 16, "st", "C 492,18 570,75 665,115"],
  ["Via Bonanno P", 17, "hw", "C 70,245 42,140 75,0"],
  ["Via Nicola Pisano", 16, "st", "C 382,240 425,0"],
  ["Via San Paolo", 16, "st", "C 674,410 780,370 888,336"],
  ["Via Sant'Antonio", 15, "st", "C 1005,198 1025,300 1046,426"],
  ["Via Giuseppe Mazzini", 15, "st", "C 1172,440 1205,270 1220,140"],
  ["Corso Italia", 16, "st", "C 1320,502 1382,346"],
  ["Via Filippo Turati", 16, "st", "C 1388,706 1468,480"],
  ["Sant'Antonio", 19, "town2", "C 954,638 1226,638"],
  ["Via Nino Bixio", 15, "st", "C 678,652 915,664"],
  ["Via Cesare Battisti", 18, "hw", "C 462,718 600,725 740,728 848,744"],
  ["no", 20, "wat", "C 28,560 72,560"],
  ["Binario 4", 17, "plat", "C 800,996 985,1032"],
  ["Binario 9", 17, "plat", "C 1330,1082 1522,1115"],
  ["Binario 8", 17, "plat", "C 1142,1108 1328,1144"],
  ["Pisa Centrale", 19, "rail", "C 1006,1049 1336,1049"],
  ["Stazione", 17, "rail", "C 916,1148 1108,1148"],
  ["Centrale", 17, "rail", "C 916,1194 1108,1194"],
  ["Via Quarantola", 16, "st", "C 532,1144 788,1146"],
  ["Via dei Cappuccini", 16, "st", "C 1034,1215 1090,1268 1180,1298 1318,1308"],
  ["useppe Sainati", 15, "st", "C 462,1422 470,1215"],
  ["San Giusto", 27, "town", "C 1074,1408 1396,1408"],
  ["Lungarno Mediceo", 17, "st", "D 107,50 230,95 402,172"],
  ["Lungarno Galileo Galilei", 17, "st", "D 142,188 300,290 502,380"],
  ["Fiume Arno", 21, "wat", "D 420,258 530,318 632,375"],
  ["Via San Martino", 16, "st", "D 70,262 180,325 270,385"],
  ["San Martino", 27, "town", "D 98,420 426,420"],
  ["San Martino", 20, "poi", "D 86,477 350,477"],
  ["Via Giordano Bruno", 15, "st", "D 130,708 160,620 240,560 310,500"],
  ["Via Giuseppe Garibaldi", 18, "st", "D 1060,102 1240,60 1400,-20"],
  ["Via del Borghetto", 17, "st", "D 772,452 850,510 930,542 1014,530"],
  ["Porta a Piagge", 28, "town", "D 850,866 1242,866"],
  ["Via Antonio Fratti", 17, "st", "D 168,1102 230,980 292,850"],
  ["Lungarno Guadalongo", 16, "st", "D 552,872 575,980 620,1080 685,1170"],
  ["Viale delle Piagge", 16, "st", "D 770,905 850,990 960,1085"],
  ["Via Carlo Cattaneo", 18, "hw", "D 445,915 520,1060 600,1215"],
  ["Via Fiorentina", 18, "hw", "D 755,1298 830,1350 940,1428"],
  ["Via Emilia", 18, "hw", "D 692,1325 790,1450"],
  ["Via Giuseppe S", 16, "st", "D 525,1280 600,1355 675,1425"],
  ["Via San Mich", 16, "st", "D 1212,942 1300,975 1375,1028"],
  ["Viale delle Pi", 16, "st", "D 1184,1222 1380,1272"],
];

function lengthOf(p: Pt[]): number {
  let n = 0;
  for (let i = 1; i < p.length; i++) n += Math.hypot(p[i][0] - p[i - 1][0], p[i][1] - p[i - 1][1]);
  return n;
}

@customElement("city-map")
class CityMap extends LitElement {
  static styles = css`
    :host { display: block; position: relative; overflow: hidden; background: #e1e1e0; }
    svg { display: block; width: 100%; height: 100%; }
    .line { fill: none; stroke-linecap: round; stroke-linejoin: round; }
    .butt { stroke-linecap: butt; }
    .minor { stroke: #e8e8e8; }
    .foot { stroke: #dcdce4; }
    .yellow { stroke: #e6e8d5; }
    .orange { stroke: #e5dacd; stroke-linecap: butt; }
    .case-yellow { stroke: #d5d7c3; }
    .case-orange { stroke: #d8ccbc; stroke-linecap: butt; }
    .case-minor, .case-foot { stroke: #dcdcdc; }
    .dash { stroke: #bcc0e4; stroke-width: 2; stroke-dasharray: 5 5; stroke-linecap: butt; }
    .red { stroke: #e3cccb; stroke-width: 1.6; stroke-dasharray: 4 4; stroke-linecap: butt; }
    text { font-family: "Noto Sans", sans-serif; paint-order: stroke; stroke: #e5e5e5; stroke-width: 2px; stroke-linejoin: round; }
    .st { fill: #a9a9a9; }
    .hw { fill: #aba99e; stroke: none; }
    .town { fill: #b6b7b8; }
    .town2 { fill: #b0b0b0; }
    .poi { fill: #bab7a9; font-style: italic; }
    .rail { fill: #aab0d0; font-weight: 700; }
    .rail2 { fill: #b4b8b8; font-weight: 700; }
    .plat { fill: #c0c0c0; stroke: #d9d9d9; }
    .wat { fill: #adbdd0; font-style: italic; stroke: none; }
    .park { fill: #a9cbe4; stroke: none; font-weight: 500; }
    .pin { position: absolute; left: 635px; top: 695px; width: 32px; height: 32px; border: 5px solid #fff; border-radius: 50%; background: #286587; }
    .tools { position: absolute; top: 9px; right: 9px; display: flex; align-items: center; justify-content: space-between; box-sizing: border-box; width: 178px; height: 94px; padding: 0 21px 0 22px; border: 1px solid #eeeeee; border-radius: 14px; background: #fff; }
    .tools svg { width: 48px; height: 48px; }
  `;

  private label([text, size, cls, geo]: [string, number, string, string], i: number) {
    const p = points(geo);
    const len = lengthOf(p);
    if (p.length === 2) {
      const a = (Math.atan2(p[1][1] - p[0][1], p[1][0] - p[0][0]) * 180) / Math.PI;
      return svg`<text class=${cls} font-size=${size} dy="0.35em" textLength=${len} lengthAdjust="spacingAndGlyphs"
        transform="translate(${p[0][0]} ${p[0][1]}) rotate(${a})">${text}</text>`;
    }
    return svg`<path id="l${i}" d=${smooth(geo)} fill="none"></path>
      <text class=${cls} font-size=${size} dy="0.35em" textLength=${len * 0.985} lengthAdjust="spacingAndGlyphs"><textPath href="#l${i}">${text}</textPath></text>`;
  }

  render() {
    const order = ["foot", "minor", "yellow", "orange"];
    return html`
      <svg viewBox="0 0 1308 1437" preserveAspectRatio="none">
        ${UNDER.map(([c, g]) => svg`<path d=${area(g)} fill=${c}></path>`)}
        <path d=${buildings()} fill="#dad8d7" stroke="#d6d4d2" stroke-width="0.6"></path>
        ${OPEN.map(([c, g]) => svg`<path d=${area(g)} fill=${c}></path>`)}
        ${PARKS.map(([c, g]) => svg`<path d=${area(g)} fill=${c}></path>`)}
        ${BLOCKS.map((g) => svg`<path d=${area(g)} fill="#d9d7d5" stroke="#d3d1cf" stroke-width="0.8"></path>`)}
        <path d=${smooth(RIVER) + "Z"} fill="#cfd8de" stroke="#c8cfd4" stroke-width="1"></path>
        <g class="line" stroke="#ccd7df">
          <path stroke-width="14" d=${smooth("B 1490,350 1400,500 1300,640 1200,850 1090,990 990,1160")}></path>
          <path stroke-width="9" d=${smooth("B 910,1270 860,1360 800,1480 790,1568")}></path>
        </g>
        <g>
          <rect x="535" y="62" width="80" height="118" rx="38" fill="#d6d4d2"></rect>
          <rect x="549" y="74" width="54" height="94" rx="27" fill="#d9e5dc"></rect>
          <rect x="556" y="91" width="41" height="64" fill="#c6dcd4"></rect>
          <path d=${area("A 805,540 870,530 905,520 935,560 935,600 890,605 870,590 805,590")} fill="#cfc8c5"></path>
          <circle cx="295" cy="252" r="11" fill="#cfc8c5"></circle>
        </g>
        ${RED.map((g) => svg`<path class="line red" d=${smooth(g)}></path>`)}
        <path d=${smooth(YARD) + "Z"} fill="#c3c3c3"></path>
        ${YARD_LINES.map((g, i) => svg`<path class="line butt" d=${smooth(g)} stroke="#dddddd" stroke-width="2.6" stroke-dasharray="11 7" stroke-dashoffset=${i * 5}></path>`)}
        ${order.map((kind) => svg`
          ${ROADS.filter((r) => r[0] === kind).map(([k, w, g]) => svg`<path class="line case-${k}" stroke-width=${w + 1.4} d=${smooth(g)}></path>`)}
          ${ROADS.filter((r) => r[0] === kind).map(([k, w, g]) => svg`<path class="line ${k}" stroke-width=${w} d=${smooth(g)}></path>`)}`)}
        <circle cx="987" cy="166" r="17" fill="#e5dacd"></circle>
        <circle cx="1295" cy="274" r="15" fill="#e6e8d5"></circle>
        <circle cx="1295" cy="274" r="6" fill="#dbe1cf" stroke="#c9ccb8"></circle>
        <circle cx="984" cy="800" r="4" fill="#bdbdbd"></circle>
        ${RAILS.map(([w, g]) => svg`<path class="line" d=${smooth(g)} stroke="#bfbfbf" stroke-width=${w}></path>
          ${w > 3 ? svg`<path class="line butt" d=${smooth(g)} stroke="#dcdcdc" stroke-width=${Math.max(1.4, w / 5)} stroke-dasharray="10 8"></path>` : nothing}`)}
        ${DASHES.map((g) => svg`<path class="line dash" d=${smooth(g)}></path>`)}
        <g class="line" stroke="#b4b8ba" stroke-width="1.6">
          <path d=${smooth("C 782,122 850,210")}></path>
          <path d=${smooth("C 815,103 883,193")}></path>
          <path d=${smooth("C 275,390 350,488")}></path>
          <path d=${smooth("C 308,370 385,475")}></path>
          <path d=${smooth("D 630,315 570,400")}></path>
          <path d=${smooth("D 657,332 597,418")}></path>
          <path d=${smooth("D 585,772 720,776")}></path>
          <path d=${smooth("D 585,803 725,812")}></path>
        </g>
        <g>
          <circle cx="221" cy="431" r="14.5" fill="#cf9c9e"></circle>
          <path d="M221 423v16M213 431h16" stroke="#efe9e9" stroke-width="4"></path>
          <path d="M125 857h3v4h3v-4h3v4h3v-4h3v8h-15zM141 857h3v4h3v-4h3v4h3v-4h1v8h-13zM125 864h28v16h-10v-4a4 4 0 0 0-8 0v4h-10z" fill="#c2b5a5"></path>
          <rect x="487" y="1203" width="18" height="18" fill="#b3b8cc"></rect>
          <rect x="421" y="1259" width="12" height="11" fill="#b3b8cc"></rect>
          <rect x="0" y="237" width="13" height="18" fill="#b3b8cc"></rect>
        </g>
        ${LABELS.map((l, i) => this.label(l, i))}
      </svg>
      <div class="pin"></div>
      <div class="tools">
        <svg viewBox="0 0 24 24"><path d=${ICON.search}></path><path d="M10 7H9v2H7v1h2v2h1v-2h2V9h-2z"></path></svg>
        <svg viewBox="0 0 24 24"><path d=${ICON.search}></path><path d="M7 9h5v1H7z"></path></svg>
      </div>
    `;
  }
}

/* ---------- Icons ---------- */

const ICON = {
  search:
    "M15.5 14h-.79l-.28-.27C15.41 12.59 16 11.11 16 9.5 16 5.91 13.09 3 9.5 3S3 5.91 3 9.5 5.91 16 9.5 16c1.61 0 3.09-.59 4.23-1.57l.27.28v.79l5 4.99L20.49 19l-4.99-5zm-6 0C7.01 14 5 11.99 5 9.5S7.01 5 9.5 5 14 7.01 14 9.5 11.99 14 9.5 14z",
  list: "M19 5v14H5V5h14m1.1-2H3.9c-.5 0-.9.4-.9.9v16.2c0 .4.4.9.9.9h16.2c.4 0 .9-.5.9-.9V3.9c0-.5-.5-.9-.9-.9zM11 7h6v2h-6V7zm0 4h6v2h-6v-2zm0 4h6v2h-6zM7 7h2v2H7zm0 4h2v2H7zm0 4h2v2H7z",
  eye: "M12 6c3.79 0 7.17 2.13 8.82 5.5C19.17 14.87 15.79 17 12 17s-7.17-2.13-8.82-5.5C4.83 8.13 8.21 6 12 6m0-2C7 4 2.73 7.11 1 11.5 2.73 15.89 7 19 12 19s9.27-3.11 11-7.5C21.27 7.11 17 4 12 4zm0 5c1.38 0 2.5 1.12 2.5 2.5S13.38 14 12 14s-2.5-1.12-2.5-2.5S10.62 9 12 9m0-2c-2.48 0-4.5 2.02-4.5 4.5S9.52 16 12 16s4.5-2.02 4.5-4.5S14.48 7 12 7z",
  eyeOff:
    "M12 6c3.79 0 7.17 2.13 8.82 5.5-.59 1.22-1.42 2.27-2.41 3.12l1.41 1.41c1.39-1.23 2.49-2.77 3.18-4.53C21.27 7.11 17 4 12 4c-1.27 0-2.49.2-3.64.57l1.65 1.65C10.66 6.09 11.32 6 12 6zm-1.07 1.14L13 9.21c.57.25 1.03.71 1.28 1.28l2.07 2.07c.08-.34.14-.7.14-1.07C16.5 9.01 14.48 7 12 7c-.37 0-.72.05-1.07.14zM2.01 3.87l2.68 2.68C3.06 7.83 1.77 9.53 1 11.5 2.73 15.89 7 19 12 19c1.52 0 2.98-.29 4.32-.82l3.42 3.42 1.41-1.41L3.42 2.45 2.01 3.87zm7.5 7.5l2.61 2.61c-.04.01-.08.02-.12.02-1.38 0-2.5-1.12-2.5-2.5 0-.05.01-.08.01-.13zm-3.4-3.4l1.75 1.75c-.23.55-.36 1.15-.36 1.78 0 2.48 2.02 4.5 4.5 4.5.63 0 1.23-.13 1.77-.36l.98.98c-.88.24-1.8.38-2.75.38-3.79 0-7.17-2.13-8.82-5.5.7-1.43 1.72-2.61 2.93-3.53z",
};

/* ---------- Layer selector ---------- */

interface Layer { name: string; opacity?: number }
interface Group { name: string; active?: boolean; layers: Layer[] }

@customElement("layer-panel")
class LayerPanel extends LitElement {
  @property({ attribute: false }) groups: Group[] = [];

  static styles = css`
    :host { display: block; box-sizing: border-box; border: 2px solid #e5e7eb; border-radius: 8px; background: #fff; height: 1108px; }
    .search { display: flex; align-items: center; gap: 9px; height: 84px; padding-left: 7px; border-bottom: 2px solid #e5e7eb; color: #6b7280; font-size: 32px; }
    .search span { margin-top: -2px; }
    .search svg { width: 48px; height: 48px; fill: currentColor; }
    .body { padding: 16px 24px 24px 23px; display: flex; flex-direction: column; gap: 24px; }
    .head { display: flex; align-items: center; justify-content: space-between; height: 64px; font-size: 32px; font-weight: 600; }
    .head span { margin-top: -1px; }
    .head.on { background: #f3f4f6; }
    .chev { width: 48px; height: 48px; fill: none; stroke: #9ca3af; stroke-width: 3; stroke-linecap: round; stroke-linejoin: round; }
    .layer { border-bottom: 2px solid #e5e7eb; padding-top: 16px; }
    .layer.plain { padding-bottom: 32px; }
    .row { display: flex; align-items: center; height: 40px; padding-left: 8px; font-size: 28px; }
    .box { width: 40px; height: 40px; border-radius: 6px; background: #286587; margin-right: 16px; }
    .box path { fill: none; stroke: #fff; stroke-width: 2.4; stroke-linecap: round; stroke-linejoin: round; }
    .name { flex: 1; }
    .info { width: 40px; height: 40px; margin-right: 4px; }
    .info circle { fill: none; stroke: #e5e7eb; stroke-width: 3.4; }
    .info path { fill: #e5e7eb; }
    .slider { display: flex; align-items: center; height: 48px; padding: 36px 0 20px 64px; }
    .slider svg { width: 48px; height: 48px; flex: none; }
    .track { position: relative; flex: 1; height: 10px; margin: 0 24px; border-radius: 5px; background: #dfe1e7; }
    .fill { height: 100%; background: #286587; }
    .thumb { position: absolute; top: -13px; box-sizing: border-box; width: 36px; height: 36px; margin-left: -18px; border: 4px solid #286587; border-radius: 50%; background: #fff; }
  `;

  private chevron = () => html`<svg class="chev" viewBox="0 0 48 48"><path d="M13.5 29.500 24 18.500 34.500 29.500"></path></svg>`;

  private layer(l: Layer) {
    const has = l.opacity !== undefined;
    return html`<div class="layer ${has ? "" : "plain"}">
      <div class="row">
        <svg class="box" viewBox="0 0 40 40"><path d="M8 20.500 16 28.500 32.500 12"></path></svg>
        <span class="name">${l.name}</span>
        <svg class="info" viewBox="0 0 40 40"><circle cx="20" cy="20" r="18.300"></circle><path d="M18 10h4v4.500h-4zM18 18.500h4v12h-4z"></path></svg>
        ${has ? this.chevron() : nothing}
      </div>
      ${has
        ? html`<div class="slider">
            <svg viewBox="0 0 24 24"><path d=${ICON.eyeOff}></path></svg>
            <div class="track">
              <div class="fill" style="width:${l.opacity}%"></div>
              <div class="thumb" style="left:${l.opacity}%"></div>
            </div>
            <svg viewBox="0 0 24 24"><path d=${ICON.eye}></path></svg>
          </div>`
        : nothing}
    </div>`;
  }

  render() {
    return html`
      <div class="search"><svg viewBox="0 0 24 24"><path d=${ICON.search}></path></svg><span>Cerca carta...</span></div>
      <div class="body">
        ${this.groups.map(
          (g) => html`<section>
            <div class="head ${g.active ? "on" : ""}"><span>${g.name}</span>${this.chevron()}</div>
            ${g.layers.map((l) => this.layer(l))}
          </section>`
        )}
      </div>
    `;
  }
}

/* ---------- Page ---------- */

const MENU: { title: string; items: string[] }[] = [
  {
    title: "Macro Components",
    items: ["Navigation Bar", "Vertical Tabs", "Breadcrumb", "Data Panel", "Toolbar", "Event Card", "Carousel", "Legend Widget", "Tabs", "Inspection Card", "Map Renderer", "Map Asset Popup", "Tree View", "Pluviometer Chart"],
  },
  { title: "Dynamic Forms", items: ["Forms"] },
  { title: "Micro Components", items: ["CDA Badge", "CDA Card", "Sheet Badge", "Icons", "Buttons", "Person Select"] },
];

const GROUPS: Group[] = [
  { name: "Italia", layers: [{ name: "Regioni", opacity: 29.3 }, { name: "Provincie", opacity: 29.3 }, { name: "Comuni", opacity: 60.6 }] },
  { name: "Tiles", layers: [{ name: "Open street map", opacity: 29.3 }] },
  { name: "Asset", active: true, layers: [{ name: "Ponte di mezzo" }] },
];

@customElement("app-root")
class AppRoot extends LitElement {
  static styles = css`
    :host { display: flex; flex-direction: column; width: 3580px; height: 2240px; overflow: hidden; background: #f5f5f3; color: #000; font-family: Inter, "Liberation Sans", sans-serif; font-size: 28px; }
    .browser { display: flex; align-items: center; box-sizing: border-box; height: 66px; padding: 0 23px 0 24px; border-bottom: 2px solid #e4e4e2; }
    .browser svg { fill: none; stroke: #6f6f6d; stroke-width: 2.6; stroke-linecap: round; stroke-linejoin: round; flex: none; }
    .nav { display: flex; align-items: center; gap: 38px; width: 1454px; }
    .nav .dim { stroke: #b4b4b2; }
    .url { flex: 1; display: flex; align-items: center; gap: 14px; font-size: 25.400px; color: #7d7d7b; white-space: pre; }
    .url b { font-weight: 600; color: #5c5c5a; }
    .right { display: flex; gap: 40px; }
    .bar { display: flex; align-items: stretch; box-sizing: border-box; height: 100px; margin: 30px 28px 32px 32px; border: 2px solid #e5e7eb; border-radius: 24px; background: #fff; }
    .brand { display: flex; align-items: center; box-sizing: border-box; width: 210px; padding-left: 38px; border-right: 2px solid #e5e7eb; color: #286587; font-size: 36px; font-weight: 450; letter-spacing: 0.7px; }
    .back { align-self: center; margin-left: 34px; fill: none; stroke: #000; stroke-width: 3.6; stroke-linecap: round; stroke-linejoin: round; }
    .tab { position: relative; display: flex; align-items: center; margin-left: 32px; color: #286587; white-space: nowrap; letter-spacing: -0.1px; }
    .tab::after { content: ""; position: absolute; left: 0; right: 0; bottom: -2px; height: 9px; border-radius: 8px 8px 0 0; background: #286587; }
    .user { display: flex; align-items: center; justify-content: center; box-sizing: border-box; width: 77px; height: 76px; margin: 10px 16px 0 auto; border: 2px solid #e5e7eb; border-radius: 12px; background: #f4f4f4; font-size: 32px; font-weight: 450; }
    .content { display: flex; align-items: flex-start; gap: 32px; margin: 0 28px 0 32px; }
    .side { display: flex; box-sizing: border-box; width: 576px; height: 1980px; border-radius: 32px; background: #fff; }
    .menu { flex: 1; padding-top: 32px; }
    .thumb { width: 24px; height: 1673px; border-radius: 12px; background: #cbd5e1; }
    .sec { padding-bottom: 24px; border-bottom: 2px solid #e5e7eb; margin-bottom: -2px; }
    .sec:last-child { border-bottom: none; }
    .sec h3 { display: flex; align-items: center; gap: 40px; height: 72px; margin: 0; padding-left: 40px; font-size: 28px; font-weight: 400; letter-spacing: -0.08px; }
    .sec + .sec h3 { position: relative; top: 1px; }
    .sec svg { width: 48px; height: 48px; }
    .item { display: flex; align-items: center; height: 80px; padding-left: 128px; color: #a3a3a3; }
    .item.on { background: #e0f2fe; color: #286587; }
    .main { flex: 1; box-sizing: border-box; height: 1872px; padding: 51px 64px 0; border-radius: 32px; background: #286587; }
    .title { display: flex; gap: 16px; align-items: center; height: 56px; margin: 0 0 85px; color: #fff; font-size: 48px; font-weight: 700; }
    .title span { color: #93b2c3; }
    .panel { position: relative; display: grid; grid-template-columns: 1356px 23px 1397px; box-sizing: border-box; height: 1616px; border: 4px dashed #e2e8f0; border-radius: 24px; background: #f8fafc; }
    .badge { position: absolute; left: 16px; top: -24px; display: flex; align-items: center; box-sizing: border-box; height: 56px; padding: 0 32px; border: 4px dashed #e2e8f0; border-radius: 28px; background: #fff; color: #286587; white-space: nowrap; letter-spacing: -0.04px; }
    .loc { display: flex; flex-direction: column; }
    .locin { flex: 1; padding: 24px 24px 24px; display: flex; flex-direction: column; }
    .lochead { display: flex; align-items: center; justify-content: space-between; height: 76px; margin-bottom: 24px; font-size: 36px; font-weight: 500; letter-spacing: -0.15px; }
    .expand { display: flex; align-items: center; justify-content: center; box-sizing: border-box; width: 76px; height: 76px; border: 2px solid #e5e7eb; border-radius: 50%; background: #fff; }
    city-map { flex: 1; }
    .split { display: flex; align-items: center; justify-content: center; background: #eeeeee; }
    .loc .split { height: 24px; }
    .split svg { fill: #cccccc; }
  `;

  private dots(cols: number, rows: number, dx: number, dy: number) {
    const out = [];
    for (let r = 0; r < rows; r++) for (let c = 0; c < cols; c++) out.push(svg`<rect x=${c * dx} y=${r * dy} width="4" height="4"></rect>`);
    const w = (cols - 1) * dx + 4;
    const h = (rows - 1) * dy + 4;
    return html`<svg width=${w} height=${h} viewBox="0 0 ${w} ${h}">${out}</svg>`;
  }

  render() {
    return html`
      <div class="browser">
        <div class="nav">
          <svg width="36" height="30" viewBox="0 0 36 30"><rect x="3.500" y="3.500" width="30" height="23" rx="3.500"></rect><path d="M14 3.500v23M7.500 8.500h3M7.500 12.500h3M7.500 16.500h3" stroke-width="2"></path></svg>
          <svg width="36" height="30" viewBox="0 0 36 30"><path d="M30 15H7M16 5.500 6.500 15l9.500 9.500"></path></svg>
          <svg class="dim" width="36" height="30" viewBox="0 0 36 30"><path d="M6 15h23M20 5.500 29.500 15 20 24.500"></path></svg>
          <svg width="36" height="34" viewBox="0 0 36 34"><path d="M28.500 19.500A11.500 11.500 0 1 1 17 8h5.500M17 2.500 22.800 8 17 13.500"></path></svg>
        </div>
        <div class="url">
          <svg width="32" height="30" viewBox="0 0 32 30"><g transform="rotate(-52 16 15)"><path d="M13 20.500H8.500a5.500 5.500 0 0 1 0-11H15a5.500 5.500 0 0 1 5 7.500M19 9.500h4.500a5.500 5.500 0 0 1 0 11H17a5.500 5.500 0 0 1-5-7.500" stroke-width="2.400"></path></g></svg>
          <span><b>bridges.local.gkops.net</b>/ui-kit/map-renderer</span>
        </div>
        <div class="right">
          <svg width="34" height="34" viewBox="0 0 34 34"><rect x="2" y="2" width="30" height="30" rx="7"></rect><path d="M10 12.500h6M22.500 12.500H25M10 21h2.500M18 21h7" stroke-width="2.200"></path><circle cx="19.300" cy="12.500" r="2.800" stroke-width="2"></circle><circle cx="14.500" cy="21" r="2.800" stroke-width="2"></circle></svg>
          <svg width="30" height="34" viewBox="0 0 30 34"><rect x="2" y="4" width="26" height="26" rx="3"></rect><path d="M15 4v26"></path></svg>
        </div>
      </div>

      <header class="bar">
        <div class="brand">KAIROS</div>
        <svg class="back" width="46" height="40" viewBox="0 0 46 40"><path d="M37 20H8M19.500 7.500 8 20l11.500 12.500"></path></svg>
        <div class="tab">Anagrafica opere</div>
        <div class="user">G</div>
      </header>

      <div class="content">
        <aside class="side">
          <nav class="menu">
            ${MENU.map(
              (s) => html`<div class="sec">
                <h3><svg viewBox="0 0 24 24"><path d=${ICON.list}></path></svg>${s.title}</h3>
                ${s.items.map((i) => html`<div class="item ${i === "Map Renderer" ? "on" : ""}">${i}</div>`)}
              </div>`
            )}
          </nav>
          <div class="thumb"></div>
        </aside>

        <main class="main">
          <h1 class="title">Map Renderer <span>Component</span></h1>
          <div class="panel">
            <div class="loc">
              <div class="locin">
                <div class="lochead">
                  Localizzazione
                  <div class="expand"><svg width="40" height="40" viewBox="0 0 24 24"><path d="M21 11V3h-8l3.290 3.290-10 10L3 13v8h8l-3.290-3.290 10-10z"></path></svg></div>
                </div>
                <city-map></city-map>
              </div>
              <div class="split">${this.dots(8, 2, 8, 7)}</div>
            </div>
            <div class="split">${this.dots(2, 8, 7, 8)}</div>
            <layer-panel .groups=${GROUPS}></layer-panel>
            <div class="badge">Map renderer and layers selector</div>
          </div>
        </main>
      </div>
    `;
  }
}
